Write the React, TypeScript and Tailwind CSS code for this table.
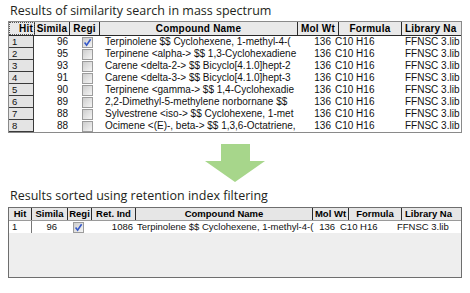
import React from 'react';

const ROWS = [
  { sim: 96, name: 'Terpinolene $$ Cyclohexene, 1-methyl-4-(', checked: true },
  { sim: 95, name: 'Terpinene <alpha-> $$ 1,3-Cyclohexadiene', checked: false },
  { sim: 93, name: 'Carene <delta-2-> $$ Bicyclo[4.1.0]hept-2', checked: false },
  { sim: 91, name: 'Carene <delta-3-> $$ Bicyclo[4.1.0]hept-3', checked: false },
  { sim: 90, name: 'Terpinene <gamma-> $$ 1,4-Cyclohexadie', checked: false },
  { sim: 89, name: '2,2-Dimethyl-5-methylene norbornane $$', checked: false },
  { sim: 88, name: 'Sylvestrene <iso-> $$ Cyclohexene, 1-met', checked: false },
  { sim: 88, name: 'Ocimene <(E)-, beta-> $$ 1,3,6-Octatriene,', checked: false },
];

function Check({ checked }: { checked: boolean }) {
  return (
    <span className="relative block w-[11px] h-[11px] border border-[#9c9c9c] bg-gradient-to-br from-[#cdcdcd] to-[#f5f5f5]">
      {checked && (
        <svg viewBox="0 0 11 11" className="absolute -left-px -top-px w-[11px] h-[11px]">
          <path d="M2.6 5.6 L4.6 8.2 L8.6 2.2" fill="none" stroke="#3558c8" strokeWidth="1.6" />
        </svg>
      )}
    </span>
  );
}

function Head({ w, children, cls = '' }: { w: string; children: React.ReactNode; cls?: string }) {
  return (
    <div className={`${w} h-full shrink-0 flex items-center overflow-hidden whitespace-nowrap border-r border-[#2a2a2a] ${cls}`}>
      {children}
    </div>
  );
}

function Arrow() {
  return (
    <svg width="60" height="38" viewBox="0 0 60 38" className="block mx-auto">
      <polygon points="16,0 45,0 45,17 60,17 30,38 0,17 16,17" fill="#a7d68b" />
    </svg>
  );
}

export default function App() {
  return (
    <div
      className="w-[470px] h-[293px] bg-white text-black overflow-hidden"
      style={{ fontFamily: '"Liberation Sans", Arial, sans-serif' }}
    >
      <div className="pl-[10px] pt-[2px] h-[21px] text-[12.5px] text-[#231f20] leading-[18px]" style={{ fontFamily: '"Open Sans", sans-serif' }}>
        Results of similarity search in mass spectrum
      </div>

      {/* top table */}
      <div className="ml-[8px] w-[454px] border border-[#8a8a8a] bg-white">
        <div className="flex h-[14px] bg-[#e9e9e9] border-b border-[#2a2a2a] text-[10px] font-bold tracking-[0.2px]">
          <Head w="w-[26px]" cls="justify-end pr-[1px] outline-1 outline-dotted outline-[#555] -outline-offset-1">Hit</Head>
          <Head w="w-[35px]" cls="justify-center">Simila</Head>
          <Head w="w-[30px]" cls="justify-center">Regi</Head>
          <Head w="w-[198px]" cls="justify-center">Compound Name</Head>
          <Head w="w-[41px]" cls="justify-center">Mol Wt</Head>
          <Head w="w-[63px]" cls="justify-center">Formula</Head>
          <div className="flex-1 h-full flex items-center pl-[3px] overflow-hidden whitespace-nowrap">Library Na</div>
        </div>
        {ROWS.map((r, i) => (
          <div key={i} className="flex h-[12px] text-[10px] leading-[12px] text-[#111]">
            <div className="w-[25px] shrink-0 bg-[#e4e4e4] border-r border-b border-[#3a3a3a] pl-[3px] text-[9.5px] leading-[11px]">{i + 1}</div>
            <div className="w-[36px] shrink-0 text-right pr-[2px]">{r.sim}</div>
            <div className="w-[30px] shrink-0 flex items-center pl-[12px]">
              <Check checked={r.checked} />
            </div>
            <div className="w-[200px] shrink-0 pl-[5px] whitespace-nowrap">{r.name}</div>
            <div className="w-[31px] shrink-0 text-right">136</div>
            <div className="w-[71px] shrink-0 pl-[4px] whitespace-nowrap">C10 H16</div>
            <div className="flex-1 pl-[3px] whitespace-nowrap">FFNSC 3.lib</div>
          </div>
        ))}
      </div>

      <div className="mt-[11px]">
        <Arrow />
      </div>

      <div className="pl-[10px] pt-[5px] h-[25px] text-[12.5px] text-[#231f20] leading-[18px]" style={{ fontFamily: '"Open Sans", sans-serif' }}>
        Results sorted using retention index filtering
      </div>

      {/* bottom table */}
      <div className="ml-[8px] w-[454px] h-[71px] border border-[#6e6e6e] bg-[#eeeeee] flex flex-col">
        <div className="flex h-[13px] bg-[#e6e6e6] border-b border-[#9a9a9a] text-[9.5px] font-bold">
          <Head w="w-[23px]" cls="justify-center">Hit</Head>
          <Head w="w-[36px]" cls="justify-center">Simila</Head>
          <Head w="w-[24px]" cls="justify-center">Regi</Head>
          <Head w="w-[44px]" cls="justify-center">Ret. Ind</Head>
          <Head w="w-[177px]" cls="justify-center">Compound Name</Head>
          <Head w="w-[36px]" cls="justify-center">Mol Wt</Head>
          <Head w="w-[53px]" cls="justify-center">Formula</Head>
          <div className="flex-1 h-full flex items-center pl-[3px] overflow-hidden whitespace-nowrap">Library Na</div>
        </div>
        <div className="flex h-[12px] bg-white text-[9.5px] leading-[12px] text-[#111]">
          <div className="w-[23px] shrink-0 border-r border-[#777] pl-[3px]">1</div>
          <div className="w-[36px] shrink-0 text-right pr-[11px]">96</div>
          <div className="w-[24px] shrink-0 flex items-center pl-[5px]">
            <Check checked />
          </div>
          <div className="w-[44px] shrink-0 text-right pr-[3px]">1086</div>
          <div className="w-[180px] shrink-0 pl-[1px] whitespace-nowrap">Terpinolene $$ Cyclohexene, 1-methyl-4-(</div>
          <div className="w-[19px] shrink-0 text-right">136</div>
          <div className="w-[61px] shrink-0 pl-[5px] whitespace-nowrap">C10 H16</div>
          <div className="flex-1 pl-[1px] whitespace-nowrap">FFNSC 3.lib</div>
        </div>
        <div className="flex-1" />
      </div>
    </div>
  );
}
